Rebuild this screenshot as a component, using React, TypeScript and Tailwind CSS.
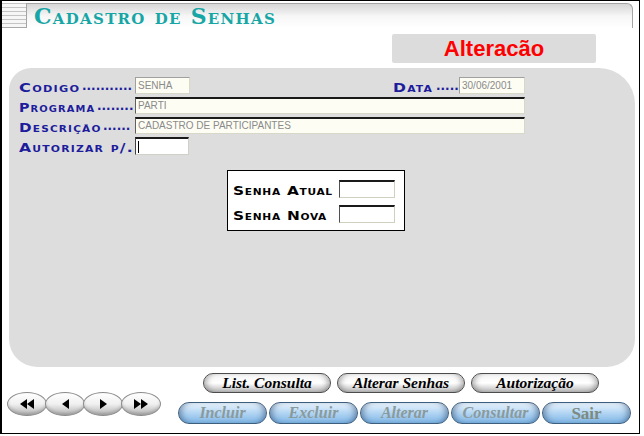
import React from 'react'

const face = "font-['DejaVu_Sans',sans-serif] font-bold [font-variant:small-caps] text-[13px] leading-none whitespace-nowrap"
const roText = "font-['Liberation_Sans',sans-serif] text-[10px] text-[#8a8a8a] leading-none"

// Copperplate-like label: wide word, then tight dot leader
function Label({ word, box, scale, w = 'w-[116px]', dots }: { word: string; box: string; scale: string; w?: string; dots: string }) {
  return (
    <div className={`${w} shrink-0 flex items-center text-[#1c1c9c]`}>
      <span className={`${box} shrink-0`}>
        <span className={`${face} tracking-[1px] inline-block origin-left ${scale}`}>{word}</span>
      </span>
      <span className="font-['DejaVu_Sans',sans-serif] font-bold text-[12px] leading-none whitespace-nowrap">{dots}</span>
    </div>
  )
}

function ReadOnly({ value, w, dark }: { value: string; w: string; dark?: boolean }) {
  return (
    <div
      className={`${w} h-[17px] bg-[#fdfdf4] flex items-center pl-[2px] border border-r-[#d8d8c8] border-b-[#d8d8c8] ${
        dark ? 'border-t-2 border-t-[#1a1a1a] border-l-[#606060]' : 'border-t-[#a0a0a0] border-l-[#a0a0a0]'
      }`}
    >
      <span className={roText}>{value}</span>
    </div>
  )
}

function NavBtn({ children }: { children: React.ReactNode }) {
  return (
    <div className="w-[40px] h-[24px] -ml-[2px] first:ml-0 rounded-[50%] border border-[#8c8c8c] bg-linear-to-b from-white via-[#f0f0f0] to-[#b4b4b4] flex items-center justify-center shadow-[inset_0_-2px_3px_rgba(0,0,0,0.15)]">
      {children}
    </div>
  )
}

function Tri({ dir }: { dir: 'l' | 'r' }) {
  return (
    <span
      className={
        dir === 'l'
          ? 'w-0 h-0 border-y-[5px] border-y-transparent border-r-[7px] border-r-black'
          : 'w-0 h-0 border-y-[5px] border-y-transparent border-l-[7px] border-l-black'
      }
    />
  )
}

function GrayPill({ text }: { text: string }) {
  return (
    <div className="w-[128px] h-[20px] rounded-full border border-[#4c4c4c] bg-linear-to-b from-[#f4f4f4] via-white to-[#b8b8b8] shadow-[inset_6px_0_6px_-4px_rgba(0,0,0,0.35),inset_-6px_0_6px_-4px_rgba(0,0,0,0.35)] flex items-center justify-center">
      <span className="font-['Liberation_Serif',serif] italic font-bold text-[15.5px] text-black leading-none">{text}</span>
    </div>
  )
}

function BluePill({ text, plain }: { text: string; plain?: boolean }) {
  return (
    <div className="w-[89px] h-[22px] rounded-full border border-[#3e5e7e] bg-linear-to-b from-[#eaf4fd] via-[#b2d5f3] to-[#80b6e6] shadow-[inset_6px_0_6px_-4px_rgba(20,50,90,0.5),inset_-6px_0_6px_-4px_rgba(20,50,90,0.5)] flex items-center justify-center">
      <span
        className={`font-['Liberation_Serif',serif] font-bold leading-none ${
          plain ? 'text-[17px] text-[#7c8a80]' : 'italic text-[16px] text-[#8a9a9c]'
        }`}
      >
        {text}
      </span>
    </div>
  )
}

export default function App() {
  return (
    <div className="w-[644px] h-[436px] bg-white overflow-hidden">
      <div className="w-[640px] h-[434px] border-l-2 border-t border-r border-b border-black flex flex-col">
        {/* header */}
        <div className="flex mt-[2px] h-[25px]">
          <div className="w-[24px] h-[25px] border-b border-[#a8a8a8] bg-[repeating-linear-gradient(to_bottom,#c4c4c4_0px,#c4c4c4_1px,#f6f6f6_1px,#f6f6f6_4px)]" />
          <div className="w-[607px] h-[25px] border-t border-l border-r border-[#a4a4a4] rounded-tr-[6px] bg-linear-to-b from-[#d6d6d6] via-[#f6f6f6] to-white flex items-end pl-[7px] pb-[1px]">
            <span className="font-['DejaVu_Serif',serif] font-bold [font-variant:small-caps] text-[#17a6a6] text-[22px] leading-none tracking-[1.3px]">
              Cadastro de Senhas
            </span>
          </div>
        </div>

        {/* status */}
        <div className="flex justify-end pr-[43px] mt-[6px]">
          <div className="w-[204px] h-[29px] bg-[#dcdcdc] rounded-[2px] flex items-center justify-center">
            <span className="font-['Liberation_Sans',sans-serif] font-bold text-[22px] text-[#ff0000] leading-none">Alteracão</span>
          </div>
        </div>

        {/* panel */}
        <div className="ml-[7px] mt-[5px] w-[626px] h-[299px] bg-[#dddddd] rounded-tl-[22px] rounded-tr-[36px] rounded-b-[28px] pt-[9px] pl-[10px] flex flex-col">
          <div className="flex items-center h-[17px]">
            <Label word="Codigo" box="w-[63px]" scale="scale-x-[1.25]" dots="..........." />
            <ReadOnly value="SENHA" w="w-[55px]" />
            <div className="w-[203px]" />
            <Label word="Data" box="w-[43px]" scale="scale-x-[1.2]" w="w-[66px]" dots="....." />
            <ReadOnly value="30/06/2001" w="w-[66px]" />
          </div>
          <div className="flex items-center h-[17px] mt-[3px]">
            <Label word="Programa" box="w-[78px]" scale="scale-x-[1.1]" dots="........" />
            <ReadOnly value="PARTI" w="w-[390px]" dark />
          </div>
          <div className="flex items-center h-[17px] mt-[3px]">
            <Label word="Descrição" box="w-[84px]" scale="scale-x-[1.17]" dots="......" />
            <ReadOnly value="CADASTRO DE PARTICIPANTES" w="w-[390px]" dark />
          </div>
          <div className="flex items-center h-[18px] mt-[3px]">
            <Label word="Autorizar p/." box="w-[115px]" scale="scale-x-[1.2]" dots="" />
            <div className="w-[54px] h-[18px] bg-white border border-t-2 border-t-[#1a1a1a] border-l-[#404040] border-r-[#d0d0c8] border-b-[#d0d0c8] flex items-center pl-[2px]">
              <span className="w-px h-[12px] bg-black" />
            </div>
          </div>

          <div className="ml-[208px] mt-[15px] w-[178px] h-[61px] bg-white border border-black pl-[5px] pt-[9px] flex flex-col gap-[7px]">
            {['Senha Atual', 'Senha Nova'].map((t) => (
              <div key={t} className="flex items-center h-[18px]">
                <span className="w-[106px] shrink-0">
                  <span className={`${face} text-black tracking-[0.6px] inline-block origin-left scale-x-[1.18]`}>{t}</span>
                </span>
                <div className="w-[56px] h-[18px] bg-white border border-t-2 border-t-[#1a1a1a] border-l-[#505050] border-r-[#d0d0c0] border-b-[#d0d0c0]" />
              </div>
            ))}
          </div>
        </div>

        {/* bottom */}
        <div className="flex mt-[6px]">
          <div className="flex pl-[5px] pt-[19px]">
            <NavBtn>
              <Tri dir="l" />
              <Tri dir="l" />
            </NavBtn>
            <NavBtn>
              <Tri dir="l" />
            </NavBtn>
            <NavBtn>
              <Tri dir="r" />
            </NavBtn>
            <NavBtn>
              <Tri dir="r" />
              <Tri dir="r" />
            </NavBtn>
          </div>
          <div className="ml-[17px] flex flex-col">
            <div className="flex gap-[6px] ml-[25px]">
              <GrayPill text="List. Consulta" />
              <GrayPill text="Alterar Senhas" />
              <GrayPill text="Autorização" />
            </div>
            <div className="flex gap-[2px] mt-[9px]">
              <BluePill text="Incluir" />
              <BluePill text="Excluir" />
              <BluePill text="Alterar" />
              <BluePill text="Consultar" />
              <BluePill text="Sair" plain />
            </div>
          </div>
        </div>
      </div>
    </div>
  )
}
